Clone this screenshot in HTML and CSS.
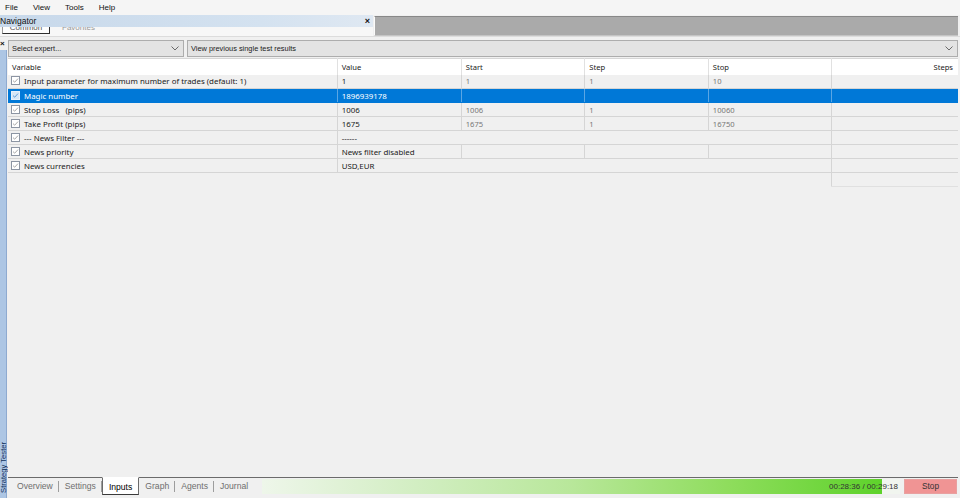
FILE: index.html
```html
<!DOCTYPE html>
<html>
<head>
<meta charset="utf-8">
<link rel="stylesheet" href="styles.css">
</head>
<body>
<div class="menubar"><span>File</span><span>View</span><span>Tools</span><span>Help</span></div>
<div class="topdock">
  <div class="navigator">
    <div class="navtitle"><span>Navigator</span><span class="close">×</span></div>
    <div class="navtabs"><div class="navtabsinner"><span class="navbtn">Common</span><span class="navfav">Favorites</span></div></div>
  </div>
  <div class="graypane"></div>
</div>
<div class="tester">
  <div class="sidestrip">
    <span class="sideclose">×</span>
    <div class="sidebar"><span class="sidelabel">Strategy Tester</span></div>
  </div>
  <div class="main">
    <div class="combos">
      <div class="combo expert"><span>Select expert...</span><svg class="chev" width="8" height="5" viewBox="0 0 8 5"><path d="M0.5 0.5 L4 4 L7.5 0.5" fill="none" stroke="#6a6a6a" stroke-width="1"/></svg></div>
      <div class="combo results"><span>View previous single test results</span><svg class="chev" width="8" height="5" viewBox="0 0 8 5"><path d="M0.5 0.5 L4 4 L7.5 0.5" fill="none" stroke="#6a6a6a" stroke-width="1"/></svg></div>
    </div>
    <table class="grid">
      <colgroup><col class="c-var"><col class="c-val"><col class="c-num"><col class="c-num"><col class="c-num"><col class="c-steps"></colgroup>
      <thead>
        <tr><th>Variable</th><th>Value</th><th>Start</th><th>Step</th><th>Stop</th><th class="steps">Steps</th></tr>
      </thead>
      <tbody>
        <tr><td class="var"><svg class="cb" width="9" height="9" viewBox="0 0 9 9"><rect x="0.5" y="0.5" width="8" height="8" fill="#fff" stroke="#8c95a3"/><path d="M2 4.6 L3.7 6.2 L7 2.6" fill="none" stroke="#a8a8a8" stroke-width="1"/></svg>Input parameter for maximum number of trades (default: 1)</td><td>1</td><td class="num">1</td><td class="num">1</td><td class="num">10</td><td></td></tr>
        <tr class="sel"><td class="var"><svg class="cb" width="9" height="9" viewBox="0 0 9 9"><rect x="0.5" y="0.5" width="8" height="8" fill="#d6e7f7" stroke="#e8f1fa"/><path d="M2 4.6 L3.7 6.2 L7 2.6" fill="none" stroke="#5a9bd8" stroke-width="1"/></svg>Magic number</td><td>1896939178</td><td></td><td></td><td></td><td></td></tr>
        <tr><td class="var"><svg class="cb" width="9" height="9" viewBox="0 0 9 9"><rect x="0.5" y="0.5" width="8" height="8" fill="#fff" stroke="#8c95a3"/><path d="M2 4.6 L3.7 6.2 L7 2.6" fill="none" stroke="#a8a8a8" stroke-width="1"/></svg>Stop Loss &nbsp; (pips)</td><td>1006</td><td class="num">1006</td><td class="num">1</td><td class="num">10060</td><td></td></tr>
        <tr><td class="var"><svg class="cb" width="9" height="9" viewBox="0 0 9 9"><rect x="0.5" y="0.5" width="8" height="8" fill="#fff" stroke="#8c95a3"/><path d="M2 4.6 L3.7 6.2 L7 2.6" fill="none" stroke="#a8a8a8" stroke-width="1"/></svg>Take Profit (pips)</td><td>1675</td><td class="num">1675</td><td class="num">1</td><td class="num">16750</td><td></td></tr>
        <tr><td class="var"><svg class="cb" width="9" height="9" viewBox="0 0 9 9"><rect x="0.5" y="0.5" width="8" height="8" fill="#fff" stroke="#8c95a3"/><path d="M2 4.6 L3.7 6.2 L7 2.6" fill="none" stroke="#a8a8a8" stroke-width="1"/></svg>--- News Filter ---</td><td class="open">------</td><td colspan="3" class="merged"></td><td></td></tr>
        <tr><td class="var"><svg class="cb" width="9" height="9" viewBox="0 0 9 9"><rect x="0.5" y="0.5" width="8" height="8" fill="#fff" stroke="#8c95a3"/><path d="M2 4.6 L3.7 6.2 L7 2.6" fill="none" stroke="#a8a8a8" stroke-width="1"/></svg>News priority</td><td>News filter disabled</td><td></td><td></td><td></td><td></td></tr>
        <tr><td class="var"><svg class="cb" width="9" height="9" viewBox="0 0 9 9"><rect x="0.5" y="0.5" width="8" height="8" fill="#fff" stroke="#8c95a3"/><path d="M2 4.6 L3.7 6.2 L7 2.6" fill="none" stroke="#a8a8a8" stroke-width="1"/></svg>News currencies</td><td class="open">USD,EUR</td><td colspan="3" class="merged"></td><td></td></tr>
        <tr class="tail"><td colspan="5"></td><td class="tailsteps"></td></tr>
      </tbody>
    </table>
    <div class="spacer"></div>
    <div class="tabbar">
      <div class="tabs">
        <span class="tab">Overview</span><span class="tab">Settings</span><span class="tab active">Inputs</span><span class="tab">Graph</span><span class="tab">Agents</span><span class="tab last">Journal</span>
      </div>
      <div class="progress">
        <div class="fill" style="width:620px"></div>
        <span class="ptext">00:28:36 / 00:29:18</span>
      </div>
      <div class="stopbtn">Stop</div>
    </div>
  </div>
</div>
</body>
</html>
```
FILE: styles.css
```css
* { box-sizing: border-box; }
html, body { margin: 0; padding: 0; }
body {
  width: 960px;
  height: 498px;
  overflow: hidden;
  background: #f0f0f0;
  font-family: "Liberation Sans", Arial, sans-serif;
  font-size: 8px;
  color: #111;
  display: flex;
  flex-direction: column;
}
.menubar {
  height: 15px;
  flex: none;
  display: flex;
  align-items: center;
  gap: 15px;
  padding-left: 5px;
  background: #f5f5f5;
  font-size: 8px;
}
.topdock {
  height: 22px;
  flex: none;
  display: flex;
  border-bottom: 1px solid #dcdcdc;
}
.navigator {
  width: 373px;
  display: flex;
  flex-direction: column;
  background: #f7f7f7;
}
.navtitle {
  height: 12px;
  display: flex;
  align-items: center;
  justify-content: space-between;
  padding: 0 3px 0 0;
  background: linear-gradient(to right, #c7d8ea, #d4e2f0 70%, #dfe8f2);
  font-size: 8.5px;
}
.navtitle .close { font-weight: bold; font-size: 9px; line-height: 1; }
.navtabs { height: 9px; overflow: hidden; }
.navtabsinner { display: flex; align-items: flex-end; margin-top: -6px; }
.navbtn {
  width: 48px;
  height: 13px;
  margin-left: 2px;
  border: 1px solid #9a9a9a;
  border-right-color: #2f2f2f;
  border-bottom-color: #2f2f2f;
  background: #fdfdfd;
  text-align: center;
  line-height: 11px;
  color: #555;
}
.navfav { margin-left: 12px; color: #999; line-height: 13px; }
.graypane {
  flex: 1;
  margin: 1px 2px 0 1px;
  background: #aaaaaa;
  border-top: 1px solid #888;
  border-left: 1px solid #fbfbfb;
  border-bottom: 1px solid #c4c4c4;
}
.tester {
  flex: 1;
  display: flex;
  min-height: 0;
}
.sidestrip {
  width: 8px;
  flex: none;
  display: flex;
  flex-direction: column;
}
.sideclose {
  height: 10px;
  margin-top: 3px;
  font-size: 8px;
  font-weight: bold;
  line-height: 8px;
}
.sidebar {
  flex: 1;
  width: 7px;
  background: #adc6e4;
  border-right: 1px solid #8eaad0;
  display: flex;
  flex-direction: column;
  justify-content: flex-end;
  align-items: center;
  padding-bottom: 5px;
}
.sidelabel {
  writing-mode: vertical-rl;
  transform: rotate(180deg);
  font-size: 7.6px;
  line-height: 7px;
  color: #10305a;
  white-space: nowrap;
}
.main {
  flex: 1;
  margin-right: 2px;
  display: flex;
  flex-direction: column;
  padding-top: 3px;
  min-width: 0;
}
.combos {
  height: 17px;
  flex: none;
  display: flex;
  gap: 3px;
  font-size: 7.4px;
}
.combo {
  height: 17px;
  display: flex;
  align-items: center;
  justify-content: space-between;
  padding: 0 4px 0 3px;
  background: #e3e3e3;
  border: 1px solid #adadad;
  color: #1a1a1a;
}
.combo.expert { width: 176px; }
.combo.results { flex: 1; }
.chev { flex: none; }
.grid {
  margin-top: 1px;
  width: 950px;
  table-layout: fixed;
  border-collapse: collapse;
  font-family: "Noto Sans", "Liberation Sans", sans-serif;
}
.c-var { width: 329px; }
.c-val { width: 124px; }
.c-num { width: 123.5px; }
.c-steps { width: 126px; }
.grid th {
  height: 16px;
  background: #fff;
  font-weight: normal;
  font-size: 7.6px;
  text-align: left;
  padding: 0 4px;
  border-right: 1px solid #e1e1e1;
  border-top: 1px solid #d6d6d6;
  white-space: nowrap;
  color: #1a1a1a;
}
.grid th.steps { text-align: right; padding-right: 5px; border-right: none; }
.grid td {
  height: 14px;
  padding: 0 4px;
  font-size: 7.9px;
  border-bottom: 1px solid #d5d5d5;
  border-right: 1px solid #d5d5d5;
  white-space: nowrap;
  overflow: hidden;
  background: #f0f0f0;
  color: #1a1a1a;
}
.grid td:last-child { border-right: none; }
.grid td.var { padding-left: 3px; }
.cb { vertical-align: -1px; margin-right: 4px; }
.grid td.num { color: #777; font-size: 7.6px; }
.grid td.open { border-right-color: transparent; }
.grid tr.sel td {
  background: #0078d7;
  color: #fff;
  border-right-color: #5aa6e4;
  border-bottom-color: #0078d7;
}
.grid tr.sel td:last-child { border-right: none; }
.grid tr.tail td { border: none; height: 14px; }
.grid tr.tail td.tailsteps { border-left: 1px solid #d5d5d5; border-bottom: 1px solid #e0e0e0; }
.grid td.merged { border-right: 1px solid #d5d5d5; }
.spacer { flex: 1; }
.tabbar {
  height: 18px;
  flex: none;
  margin-bottom: 3px;
  display: flex;
  align-items: stretch;
  border-top: 1px solid #6b6b6b;
}
.tabs { display: flex; padding-left: 3px; width: 254px; }
.tab {
  padding: 0 6px;
  color: #6e6e6e;
  line-height: 16px;
  font-size: 8.6px;
  position: relative;
}
.tab::after {
  content: "";
  position: absolute;
  right: 0;
  top: 3px;
  height: 11px;
  border-right: 1px solid #9d9d9d;
}
.tab.active {
  background: #fff;
  color: #000;
  margin: -1px 0 0 0;
  padding: 1px 6px 0;
  border: 1px solid #6b6b6b;
  border-top-color: #fff;
  border-bottom-color: #3a3a3a;
  height: 18px;
}
.tab.active::after, .tab.last::after { display: none; }
.progress {
  width: 638px;
  height: 15px;
  margin-top: 1px;
  position: relative;
  background: #f1f5ef;
}
.fill {
  height: 100%;
  background: linear-gradient(to right, #eef6ea, #d2eec2 25%, #b8e79a 50%, #8fdd5d 75%, #5ed22b);
}
.ptext {
  position: absolute;
  right: 2px;
  top: 0;
  line-height: 15px;
  font-size: 8px;
  color: #333;
}
.stopbtn {
  width: 53px;
  margin: 1px 0 0 4px;
  height: 15px;
  background: #f09494;
  border: 1px solid #e8a0a0;
  text-align: center;
  line-height: 13px;
  color: #333;
  font-size: 8.3px;
}
```
